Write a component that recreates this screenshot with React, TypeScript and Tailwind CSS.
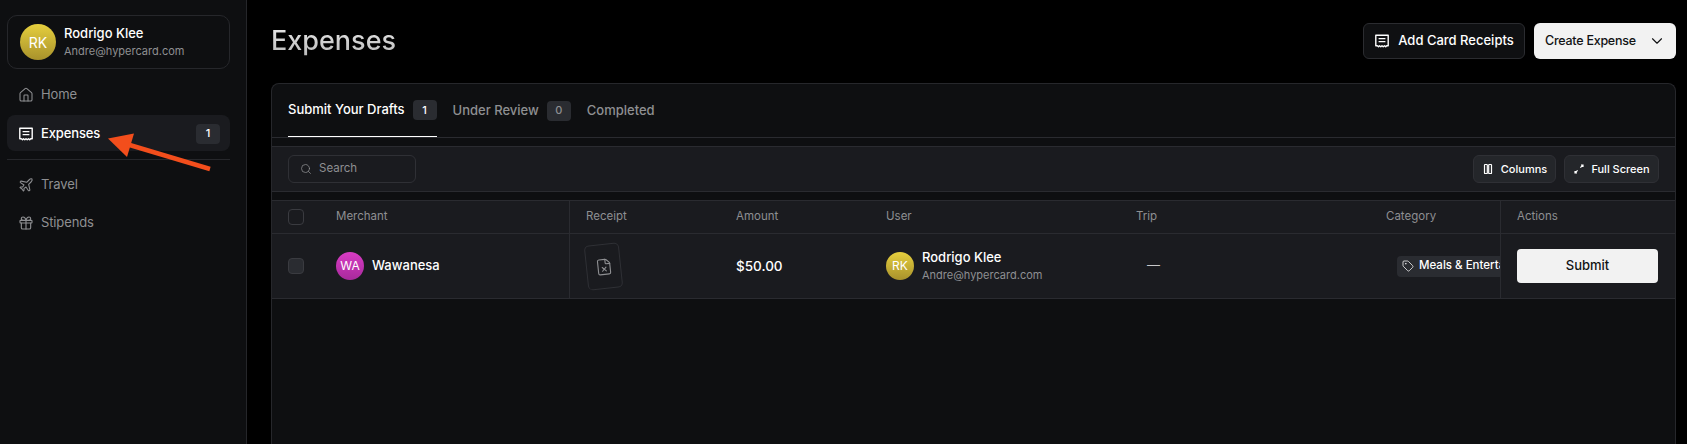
import { Home, Plane, Gift, Search, ChevronDown, Tag, FileX } from "lucide-react";

function ReceiptIcon({ className }: { className?: string }) {
  return (
    <svg viewBox="0 0 16 16" fill="none" stroke="currentColor" strokeWidth="1.4" className={className}>
      <path d="M1.8 2.2h12.4v10.6l-1.5 0-1 1-1.2-1-1.3 1-1.2-1-1.2 1-1.3-1-1 1-1.2-1H1.8z" strokeLinejoin="round" />
      <path d="M4.6 5.6h6.8M4.6 8.6h6.8" />
    </svg>
  );
}

function ColumnsIcon({ className }: { className?: string }) {
  return (
    <svg viewBox="0 0 12 12" fill="none" stroke="currentColor" strokeWidth="1.2" className={className}>
      <rect x="2.5" y="1.5" width="2.8" height="9" rx="0.6" />
      <rect x="6.7" y="1.5" width="2.8" height="9" rx="0.6" />
    </svg>
  );
}

function ExpandIcon({ className }: { className?: string }) {
  return (
    <svg viewBox="0 0 12 12" fill="none" stroke="currentColor" strokeWidth="1.2" className={className}>
      <path d="M7.4 4.6L10 2M8 2h2v2M4.6 7.4L2 10M2 8v2h2" />
    </svg>
  );
}

function Avatar({ initials, size, text, gradient }: { initials: string; size: string; text: string; gradient: string }) {
  return (
    <div className={`flex shrink-0 items-center justify-center rounded-full text-white ${size} ${text} ${gradient}`}>
      {initials}
    </div>
  );
}

function NavItem({ icon, label }: { icon: React.ReactNode; label: string }) {
  return (
    <div className="flex h-[36px] items-center gap-[7px] pl-[11px] text-[13px] tracking-[-0.01em] text-[#8e8f92]">
      {icon}
      <span>{label}</span>
    </div>
  );
}

const gold = "bg-gradient-to-b from-[#e6cf3e] to-[#a8922c]";
const pink = "bg-gradient-to-b from-[#d93cc4] to-[#a82a9c]";

export default function App() {
  return (
    <div
      className="relative flex h-[444px] w-[1687px] overflow-hidden bg-black"
      style={{ fontFamily: "Inter, 'Liberation Sans', sans-serif" }}
    >
      <aside className="w-[247px] shrink-0 border-r border-[#25262a] bg-[#0e0f11] pl-[7px] pr-[16px] pt-[15px]">
        <div className="flex h-[54px] items-center gap-[8px] rounded-[10px] border border-[#26272b] pl-[12px]">
          <Avatar initials="RK" size="h-[36px] w-[36px]" text="text-[14px]" gradient={gold} />
          <div className="leading-none">
            <div className="text-[13px] font-medium text-white">Rodrigo Klee</div>
            <div className="mt-[6px] text-[11px] text-[#8e8f92]">Andre@hypercard.com</div>
          </div>
        </div>
        <div className="mt-[8px]">
          <NavItem icon={<Home className="h-[16px] w-[16px]" strokeWidth={1.6} />} label="Home" />
        </div>
        <div className="mt-[2px] flex h-[36px] items-center gap-[7px] rounded-[8px] bg-[#1a1b1f] pl-[11px] pr-[10px] pt-[1px] text-[13px] font-medium tracking-[-0.01em] text-white">
          <ReceiptIcon className="h-[16px] w-[16px]" />
          <span className="flex-1">Expenses</span>
          <span className="flex h-[20px] w-[24px] items-center justify-center rounded-[4px] bg-[#2a2c31] text-[11px]">1</span>
        </div>
        <div className="mt-[8px] h-px bg-[#26272b]" />
        <div className="mt-[7px]">
          <NavItem icon={<Plane className="h-[16px] w-[16px]" strokeWidth={1.6} />} label="Travel" />
        </div>
        <div className="mt-[2px]">
          <NavItem icon={<Gift className="h-[16px] w-[16px]" strokeWidth={1.7} />} label="Stipends" />
        </div>
      </aside>

      <main className="min-w-0 flex-1 pl-[24px] pr-[11px]">
        <header className="flex h-[83px] items-start justify-between pt-[23px]">
          <h1 className="bg-gradient-to-b from-[#eeeeee] to-[#b5b5b5] bg-clip-text text-[27px] font-medium leading-[36px] text-transparent">
            Expenses
          </h1>
          <div className="flex gap-[9px]">
            <button className="flex h-[36px] w-[162px] items-center justify-center gap-[8px] rounded-[6px] border border-[#2b2c30] bg-[#0f1012] text-[13px] font-medium text-white">
              <ReceiptIcon className="h-[16px] w-[16px]" />
              Add Card Receipts
            </button>
            <button className="flex h-[36px] w-[142px] items-center justify-between rounded-[6px] bg-[#f2f2f2] pl-[11px] pr-[10px] text-[12.5px] font-medium tracking-[-0.02em] text-[#111214]">
              Create Expense
              <ChevronDown className="h-[18px] w-[18px]" strokeWidth={1.5} />
            </button>
          </div>
        </header>

        <section className="h-[400px] rounded-t-[8px] border border-b-0 border-[#26272b] bg-[#0e0f11]">
          <div className="flex h-[54px] items-stretch gap-[16px] border-b border-[#2a2b30] pl-[16px] text-[13px] font-medium">
            <div className="flex items-center gap-[8px] border-b border-white text-white">
              Submit Your Drafts
              <span className="flex h-[20px] w-[24px] items-center justify-center rounded-[4px] bg-[#2a2c31] text-[11px]">1</span>
            </div>
            <div className="flex items-center gap-[8px] text-[#8e8f92]">
              Under Review
              <span className="flex h-[20px] w-[24px] items-center justify-center rounded-[4px] bg-[#2a2c31] text-[11px]">0</span>
            </div>
            <div className="flex items-center text-[#8e8f92]">Completed</div>
          </div>

          <div className="mt-[8px] flex h-[46px] items-center justify-between border-y border-[#2a2b30] bg-[#1a1b1f] px-[16px]">
            <div className="flex h-[28px] w-[128px] items-center gap-[7px] rounded-[6px] border border-[#2f3035] pl-[11px] text-[11.5px] text-[#8e8f92]">
              <Search className="h-[12px] w-[12px]" strokeWidth={1.5} />
              Search
            </div>
            <div className="flex gap-[8px]">
              <button className="flex h-[28px] w-[83px] items-center justify-center gap-[7px] rounded-[6px] border border-[#2f3035] bg-[#24262a] text-[11px] font-medium text-white">
                <ColumnsIcon className="h-[12px] w-[12px]" />
                Columns
              </button>
              <button className="flex h-[28px] w-[95px] items-center justify-center gap-[6px] rounded-[6px] border border-[#2f3035] bg-[#24262a] text-[11px] font-medium text-white">
                <ExpandIcon className="h-[12px] w-[12px]" />
                Full Screen
              </button>
            </div>
          </div>

          <div className="mt-[8px] border-t border-[#2a2b30] bg-[#1a1b1f]">
            <div className="flex h-[33px] border-b border-[#2a2b30] text-[11.5px] text-[#8e8f92]">
              <div className="flex w-[298px] items-center border-r border-[#2a2b30] pl-[16px]">
                <span className="h-[16px] w-[16px] rounded-[4px] border border-[#3a3b40]" />
                <span className="ml-[32px]">Merchant</span>
              </div>
              <div className="flex w-[150px] items-center pl-[16px]">Receipt</div>
              <div className="flex w-[150px] items-center pl-[16px]">Amount</div>
              <div className="flex w-[250px] items-center pl-[16px]">User</div>
              <div className="flex w-[250px] items-center pl-[16px]">Trip</div>
              <div className="flex w-[130px] items-center pl-[16px]">Category</div>
              <div className="flex flex-1 items-center border-l border-[#2a2b30] pl-[16px]">Actions</div>
            </div>
            <div className="flex h-[65px] border-b border-[#2a2b30]">
              <div className="flex w-[298px] items-center border-r border-[#2a2b30] pl-[16px]">
                <span className="h-[16px] w-[16px] rounded-[4px] border border-[#3a3b40] bg-[#2a2c31]" />
                <div className="ml-[32px] flex items-center gap-[8px]">
                  <Avatar initials="WA" size="h-[28px] w-[28px]" text="text-[12px]" gradient={pink} />
                  <span className="text-[13px] font-medium text-white">Wawanesa</span>
                </div>
              </div>
              <div className="flex w-[150px] items-center pl-[16px]">
                <div className="flex h-[45px] w-[35px] -rotate-6 items-center justify-center rounded-[5px] border border-[#2f3035]">
                  <FileX className="h-[18px] w-[18px] text-[#8e8f92]" strokeWidth={1.5} />
                </div>
              </div>
              <div className="flex w-[150px] items-center pl-[16px] text-[13.5px] font-medium text-white">$50.00</div>
              <div className="flex w-[250px] items-center gap-[8px] pl-[16px]">
                <Avatar initials="RK" size="h-[28px] w-[28px]" text="text-[12px]" gradient={gold} />
                <div className="leading-none">
                  <div className="text-[13px] font-medium text-white">Rodrigo Klee</div>
                  <div className="mt-[6px] text-[11px] text-[#8e8f92]">Andre@hypercard.com</div>
                </div>
              </div>
              <div className="flex w-[250px] items-center pl-[11px]">
                <span className="ml-[16px] text-[13px] text-[#c8c8ca]">—</span>
              </div>
              <div className="flex w-[130px] items-center overflow-hidden pl-[27px]">
                <div className="flex h-[21px] shrink-0 items-center gap-[5px] rounded-[4px] bg-[#2a2c31] px-[5px] text-[11.5px] font-medium whitespace-nowrap text-white">
                  <Tag className="h-[12px] w-[12px]" strokeWidth={1.5} />
                  Meals &amp; Entertainment
                </div>
              </div>
              <div className="flex flex-1 items-center border-l border-[#2a2b30] pl-[16px]">
                <button className="flex h-[34px] w-[141px] items-center justify-center rounded-[4px] bg-[#f2f2f2] text-[13px] font-medium text-[#111214]">
                  Submit
                </button>
              </div>
            </div>
          </div>
        </section>
      </main>

      <svg className="pointer-events-none absolute left-[100px] top-[125px] h-[55px] w-[120px]" viewBox="100 125 120 55">
        <path d="M108 138.5L134 133.5L127 157Z" fill="#f34e1c" />
        <path d="M128 144.5L210 169" stroke="#f34e1c" strokeWidth="4.5" />
      </svg>
    </div>
  );
}
